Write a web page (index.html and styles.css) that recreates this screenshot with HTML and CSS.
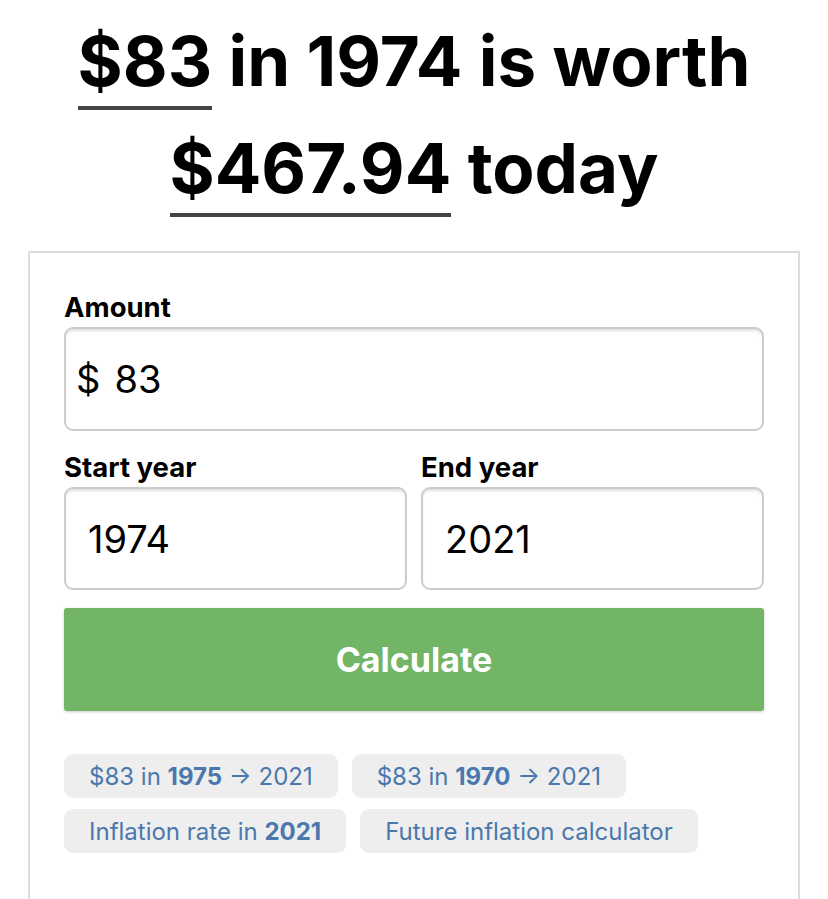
FILE: index.html
```html
<!DOCTYPE html>
<html lang="en">
<head>
<meta charset="utf-8">
<title>Inflation calculator</title>
<link rel="stylesheet" href="styles.css">
</head>
<body>
<main class="page">
  <h1 class="headline">
    <span class="hl-amount">$83</span> in 1974 is worth<br>
    <span class="hl-amount">$467.94</span> today
  </h1>

  <section class="card">
    <div class="field">
      <label class="label" for="amount">Amount</label>
      <div class="box box-amount">
        <span class="prefix">$</span>
        <input id="amount" class="input" type="text" value="83">
      </div>
    </div>

    <div class="years">
      <div class="field">
        <label class="label" for="start">Start year</label>
        <div class="box">
          <input id="start" class="input" type="text" value="1974">
        </div>
      </div>
      <div class="field">
        <label class="label" for="end">End year</label>
        <div class="box">
          <input id="end" class="input" type="text" value="2021">
        </div>
      </div>
    </div>

    <button class="calc" type="button">Calculate</button>

    <div class="chips">
      <a class="chip" href="#">$83 in <b>1975</b> → 2021</a>
      <a class="chip" href="#">$83 in <b>1970</b> → 2021</a>
      <a class="chip" href="#">Inflation rate in <b>2021</b></a>
      <a class="chip" href="#">Future inflation calculator</a>
    </div>
  </section>
</main>
</body>
</html>
```

FILE: styles.css
```css
* { box-sizing: border-box; }

html, body {
  margin: 0;
  padding: 0;
  background: #ffffff;
}

body {
  font-family: Inter, "Noto Sans", "Liberation Sans", sans-serif;
  color: #000;
  overflow: hidden;
}

.page {
  padding: 8px 28px 0;
}

.headline {
  margin: 0;
  text-align: center;
  font-size: 69px;
  line-height: 107px;
  font-weight: 700;
  letter-spacing: 0;
}

.hl-amount {
  display: inline-block;
  line-height: 69px;
  padding-bottom: 10px;
  border-bottom: 4px solid #444444;
}

.card {
  margin-top: 29px;
  border: 2px solid #dcdcdc;
  padding: 39px 34px 80px;
}

.field {
  display: flex;
  flex-direction: column;
  min-width: 0;
}

.label {
  font-size: 27.5px;
  line-height: 30px;
  font-weight: 700;
  margin-bottom: 5px;
}

.box {
  display: flex;
  align-items: center;
  height: 103px;
  border: 2px solid #cccccc;
  border-radius: 9px;
  box-shadow: inset 0 3px 3px -1px rgba(0, 0, 0, 0.13);
  padding: 0 22px;
  background: #fff;
}

.box-amount {
  height: 104px;
  padding-left: 10px;
}

.prefix {
  font-size: 38px;
  font-weight: 400;
  margin-right: 14px;
}

.input {
  flex: 1;
  width: 100%;
  min-width: 0;
  border: 0;
  outline: 0;
  padding: 0;
  background: transparent;
  font-family: inherit;
  font-size: 38px;
  font-weight: 400;
  color: #000;
}

.years {
  display: grid;
  grid-template-columns: minmax(0, 1fr) minmax(0, 1fr);
  column-gap: 14px;
  margin-top: 21px;
}

.calc {
  display: block;
  width: 100%;
  height: 103px;
  margin-top: 18px;
  border: 0;
  border-radius: 3px;
  background: #72b566;
  box-shadow: 0 1px 3px rgba(0, 0, 0, 0.2);
  color: #fff;
  font-family: Inter, "Liberation Sans", sans-serif;
  font-size: 34px;
  font-weight: 700;
}

.chips {
  display: flex;
  flex-wrap: wrap;
  gap: 11px 14px;
  margin-top: 43px;
}

.chip {
  display: flex;
  align-items: center;
  height: 44px;
  padding: 0 25px;
  border-radius: 9px;
  background: #eeeeee;
  color: #4a78ad;
  text-decoration: none;
  font-size: 24px;
  font-weight: 400;
  white-space: pre;
}

.chip b { font-weight: 700; }
```
